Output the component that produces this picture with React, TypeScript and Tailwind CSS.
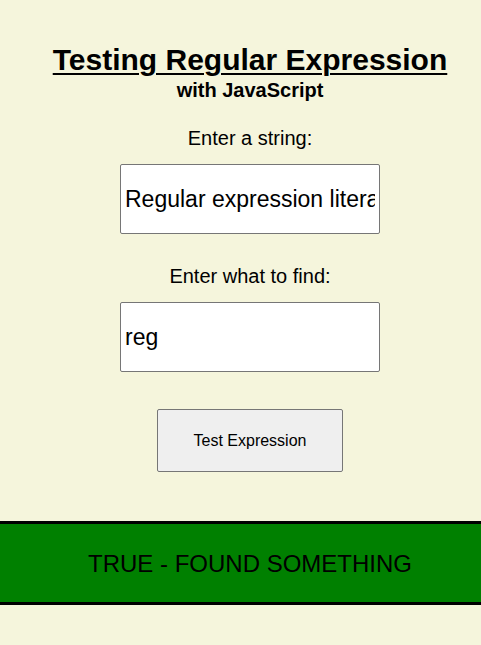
import React, { useState } from 'react';

export default function App() {
  const [text, setText] = useState('Regular expression literal');
  const [find, setFind] = useState('reg');

  const found = new RegExp(find, 'i').test(text);

  return (
    <div className="min-h-[645px] w-full overflow-hidden bg-[#f5f5dc] font-['Liberation_Sans',Arial,sans-serif] text-black">
      <div className="w-[500px] flex flex-col items-center pt-[44px]">
        <h1 className="text-[30px] leading-[32px] font-bold underline underline-offset-[3px] decoration-2">
          Testing Regular Expression
        </h1>
        <h2 className="mt-[3px] text-[20px] leading-[22px] font-bold">with JavaScript</h2>

        <label className="mt-[26px] text-[20px] leading-[22px]">Enter a string:</label>
        <input
          value={text}
          onChange={(e) => setText(e.target.value)}
          className="mt-[15px] w-[260px] h-[70px] bg-white border border-[#767676] rounded-[2px] px-[4px] text-[23px] outline-none"
        />

        <label className="mt-[31px] text-[20px] leading-[22px]">Enter what to find:</label>
        <input
          value={find}
          onChange={(e) => setFind(e.target.value)}
          className="mt-[15px] w-[260px] h-[70px] bg-white border border-[#767676] rounded-[2px] px-[4px] text-[23px] outline-none"
        />

        <button className="mt-[37px] w-[186px] h-[63px] bg-[#efefef] border border-[#767676] rounded-[2px] text-[16px]">
          Test Expression
        </button>
      </div>

      <div
        className={
          'mt-[49px] h-[84px] border-y-[3px] border-black flex items-center justify-start ' +
          (found ? 'bg-[#008000]' : 'bg-[#ff0000]')
        }
      >
        <div className="w-[500px] shrink-0 text-center text-[24px] pt-[1px]">
          {found ? 'TRUE - FOUND SOMETHING' : 'FALSE - NOTHING FOUND'}
        </div>
      </div>
    </div>
  );
}
